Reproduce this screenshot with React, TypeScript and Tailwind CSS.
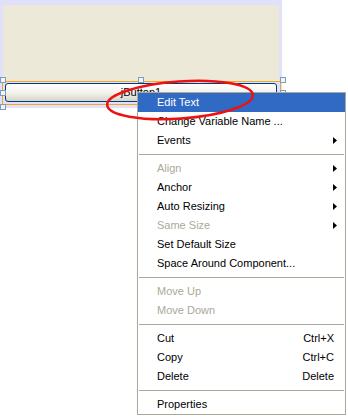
import React from "react";

type Item =
  | { type: "item"; label: string; disabled?: boolean; sub?: boolean; shortcut?: string; active?: boolean }
  | { type: "sep" };

const items: Item[] = [
  { type: "item", label: "Edit Text", active: true },
  { type: "item", label: "Change Variable Name ..." },
  { type: "item", label: "Events", sub: true },
  { type: "sep" },
  { type: "item", label: "Align", disabled: true, sub: true },
  { type: "item", label: "Anchor", sub: true },
  { type: "item", label: "Auto Resizing", sub: true },
  { type: "item", label: "Same Size", disabled: true, sub: true },
  { type: "item", label: "Set Default Size" },
  { type: "item", label: "Space Around Component..." },
  { type: "sep" },
  { type: "item", label: "Move Up", disabled: true },
  { type: "item", label: "Move Down", disabled: true },
  { type: "sep" },
  { type: "item", label: "Cut", shortcut: "Ctrl+X" },
  { type: "item", label: "Copy", shortcut: "Ctrl+C" },
  { type: "item", label: "Delete", shortcut: "Delete" },
  { type: "sep" },
  { type: "item", label: "Properties" },
];

function Handle({ x, y }: { x: number; y: number }) {
  return (
    <div
      className="absolute w-[6px] h-[6px] border border-[#7f9db9] bg-[#f0f4f8]"
      style={{ left: x, top: y }}
    />
  );
}

export default function App() {
  return (
    <div
      className="relative w-[348px] h-[418px] bg-white overflow-hidden text-[11px]"
      style={{ fontFamily: "Tahoma, 'Liberation Sans', Arial, sans-serif" }}
    >
      {/* design canvas */}
      <div className="w-[282px] h-[108px] bg-[#e0e0fa] flex flex-col pt-[5px] px-[3px]">
        <div className="h-[76px] bg-[#ece9d8]" />
        <div className="-ml-[1px] w-[279px] h-[24px] border border-[#f5a623] flex flex-col pt-[1px] pl-[2px] pr-[3px]">
          <div className="h-[19px] rounded-[3px] border border-[#003c74] bg-gradient-to-b from-[#ffffff] via-[#f3f3ef] to-[#d8d4c8] flex items-center justify-center text-black">
            jButton1
          </div>
        </div>
      </div>
      <Handle x={0} y={77} />
      <Handle x={138} y={77} />
      <Handle x={280} y={77} />
      <Handle x={0} y={90} />
      <Handle x={280} y={90} />
      <Handle x={0} y={104} />

      {/* context menu */}
      <div className="absolute left-[137px] top-[92px] w-[209px] border border-[#aca899] bg-white flex flex-col">
        {items.map((it, i) =>
          it.type === "sep" ? (
            <div key={i} className="h-[9px] flex items-center px-[1px]">
              <div className="w-full h-px bg-[#aca899]" />
            </div>
          ) : (
            <div
              key={i}
              className={
                "h-[19px] flex items-center pl-[19px] pr-[8px] " +
                (it.active ? "bg-[#316ac5] text-white" : it.disabled ? "text-[#aca899]" : "text-black")
              }
            >
              <span className="flex-1 whitespace-nowrap">{it.label}</span>
              {it.shortcut && <span className="whitespace-nowrap pr-[3px]">{it.shortcut}</span>}
              {it.sub && (
                <svg width="4" height="7" viewBox="0 0 4 7">
                  <path d="M0 0 L4 3.5 L0 7 Z" fill="#000" />
                </svg>
              )}
            </div>
          )
        )}
      </div>

      {/* red annotation ellipse */}
      <svg className="absolute left-0 top-0 pointer-events-none" width="348" height="418">
        <ellipse
          cx="180"
          cy="100"
          rx="73"
          ry="18.5"
          transform="rotate(-4 180 100)"
          fill="none"
          stroke="#ee1111"
          strokeWidth="2.5"
        />
      </svg>
    </div>
  );
}
